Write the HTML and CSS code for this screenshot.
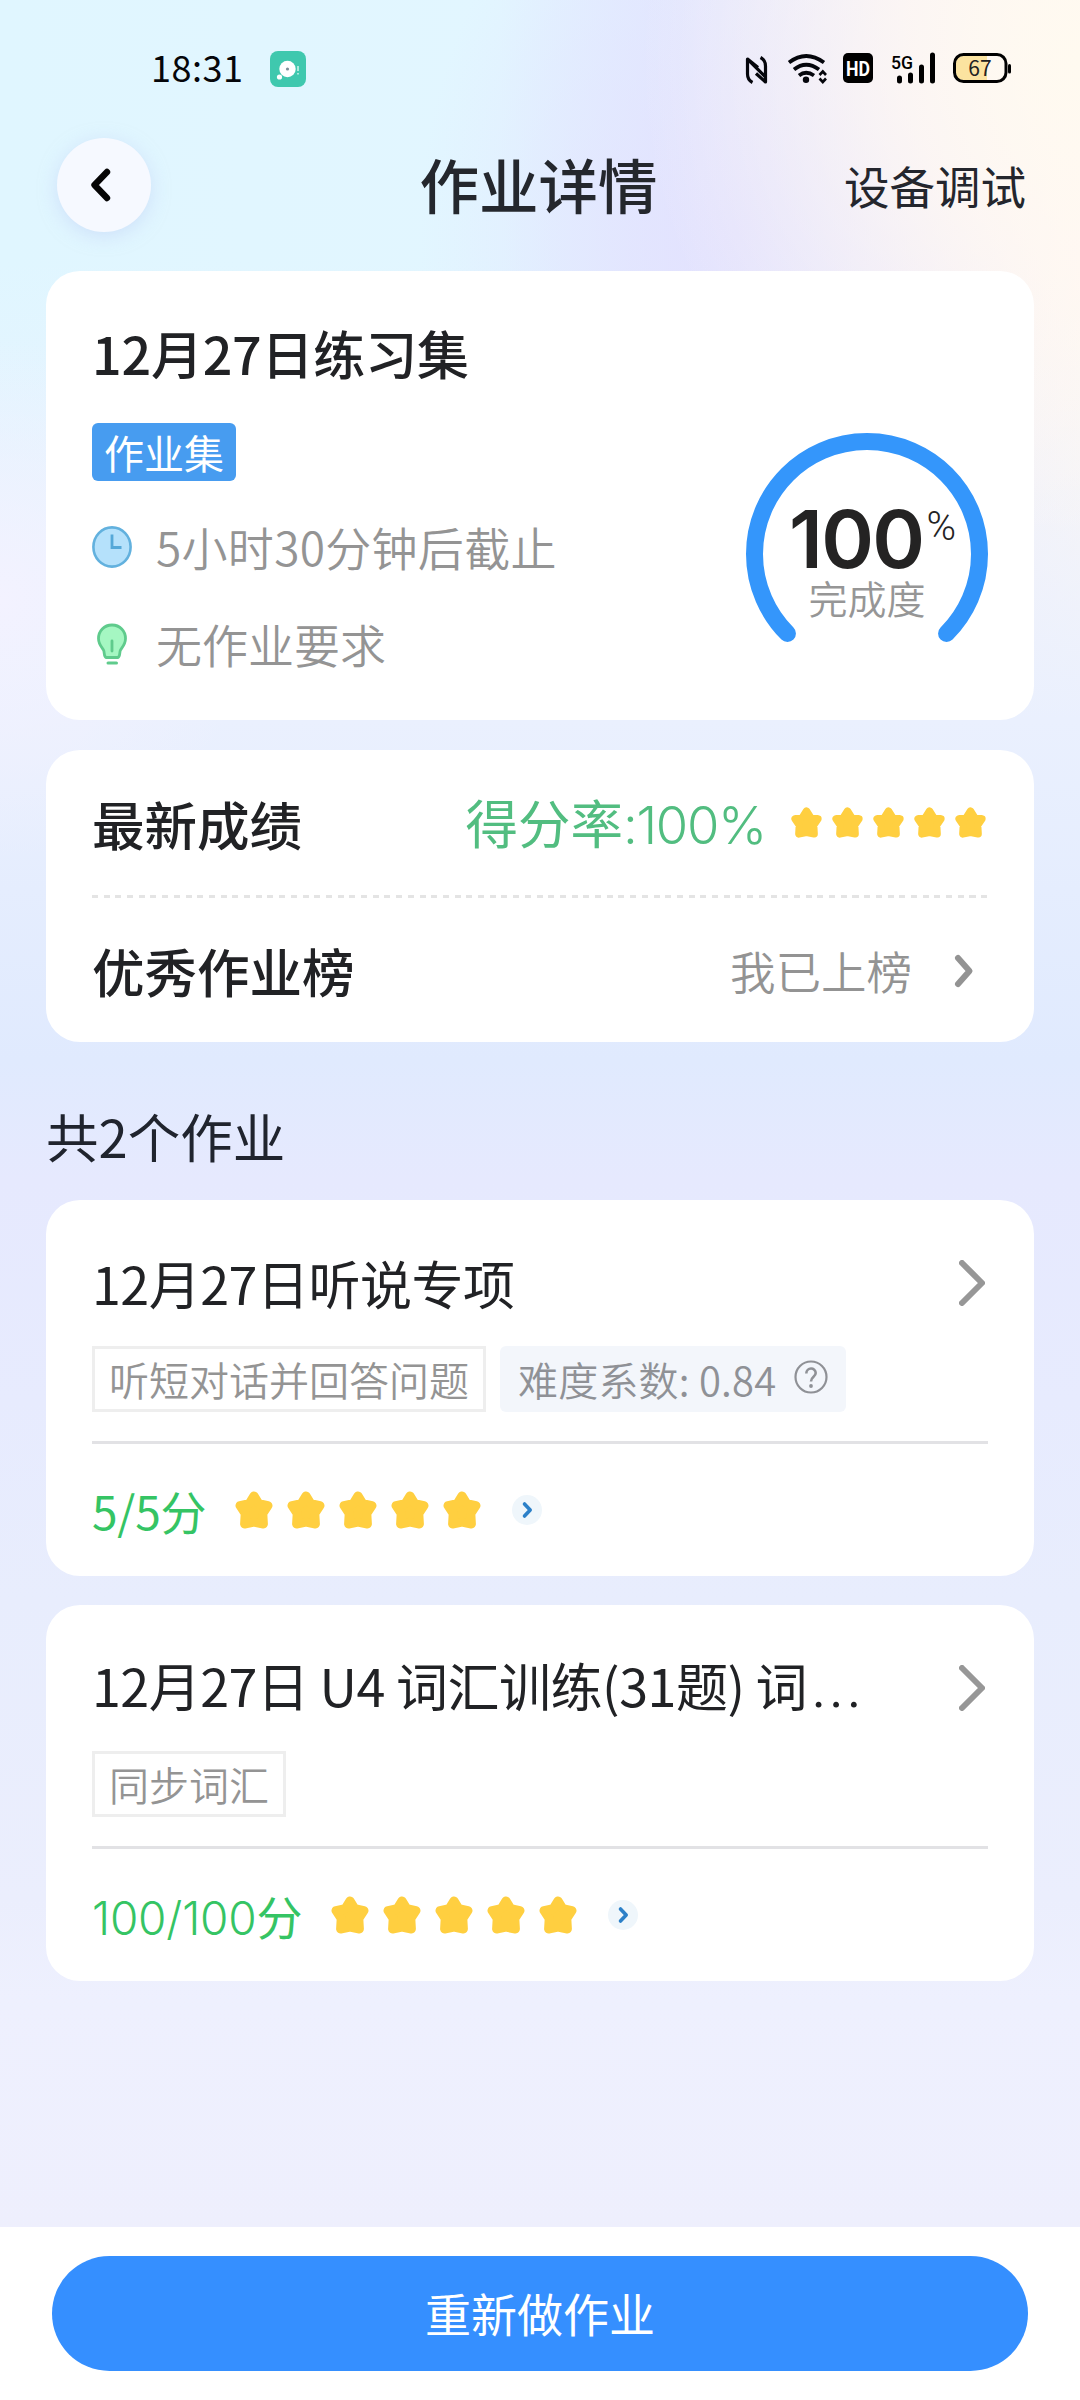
FILE: index.html
```html
<!DOCTYPE html>
<html lang="zh-CN">
<head>
<meta charset="utf-8">
<title>作业详情</title>
<link rel="stylesheet" href="styles.css">
</head>
<body>
<svg class="defs" width="0" height="0" aria-hidden="true">
  <symbol id="star" viewBox="0 0 38 38"><path d="M19 5 L23.8 12.6 L33 14.600 L27.800 22.400 L28.400 33 L19 31.200 L9.600 33 L10.200 22.400 L5 14.600 L14.200 12.600Z" fill="#ffcf40" stroke="#ffcf40" stroke-width="9" stroke-linejoin="round"/></symbol>
  <symbol id="go" viewBox="0 0 30 30"><circle cx="15" cy="15" r="15" fill="#eff6fb"/><path d="M12.500 9 L18.200 15 L12.500 21" fill="none" stroke="#2c80c8" stroke-width="3.600" stroke-linecap="round" stroke-linejoin="round"/></symbol>
  <symbol id="chev" viewBox="0 0 26 46"><path d="M3 3 L23 23 L3 43" fill="none" stroke="#979797" stroke-width="6" stroke-linecap="round" stroke-linejoin="round"/></symbol>
</svg>
<div class="screen">
  <div class="statusbar">
    <span class="time">18:31</span>
    <svg class="app" width="36" height="36" viewBox="0 0 36 36"><rect width="36" height="36" rx="8" fill="#3fc8ae"/><circle cx="17.5" cy="18" r="8.2" fill="#fff"/><circle cx="9.5" cy="26" r="2.6" fill="#fff"/><circle cx="17.5" cy="18" r="1.6" fill="#7d8f9a"/><path d="M28 15v5M28 22v1.5" stroke="#b8eee2" stroke-width="1.8"/></svg>
    <svg class="sys" width="270" height="36" viewBox="744 50 270 36">
      <path d="M752.500 82.500Q747.500 80 747.500 74V59L765.500 77V82L756 73.500M747.500 59L758 67.500M760.500 57.500Q765.500 60 765.500 66V81" fill="none" stroke="#05060c" stroke-width="3.200" stroke-linejoin="round"/>
      <g fill="none" stroke="#05060c" stroke-width="3.800"><path d="M789 62.500Q806 49.500 824 62.500"/><path d="M794 69.500Q806 60 819 69.500"/><path d="M799 75.500Q806 70 814 75.500"/></g>
      <circle cx="806" cy="79.800" r="3.200" fill="#05060c"/>
      <path d="M819.500 75L822.800 71.500L826 75M819.500 78.500L822.800 82L826 78.500" fill="none" stroke="#05060c" stroke-width="2.600"/>
      <rect x="843" y="53" width="30" height="30" rx="5" fill="#000"/>
      <text x="858" y="75.500" class="hd" text-anchor="middle" textLength="24" lengthAdjust="spacingAndGlyphs">HD</text>
      <text x="891" y="68.500" class="g5" textLength="22" lengthAdjust="spacingAndGlyphs">5G</text>
      <path d="M899.500 78V81M910.500 75V81M921.500 67V81M932.500 55V81" stroke="#000" stroke-width="5" stroke-linecap="round"/>
      <path d="M963 56H987V80H963Q956 80 956 73V63Q956 56 963 56Z" fill="#fbe3a0"/>
      <rect x="954.500" y="54.500" width="51.500" height="27" rx="9" fill="none" stroke="#000" stroke-width="3"/>
      <path d="M1009.500 65.500V72" stroke="#000" stroke-width="3" stroke-linecap="round"/>
      <text x="980" y="75.500" class="bat" text-anchor="middle">67</text>
    </svg>
  </div>

  <header class="nav">
    <div class="back"><svg width="30" height="40" viewBox="0 0 30 40"><path d="M21 7L8.500 20L21 33" fill="none" stroke="#050505" stroke-width="6.400" stroke-linecap="round" stroke-linejoin="round"/></svg></div>
    <h1>作业详情</h1>
    <span class="debug">设备调试</span>
  </header>

  <section class="card summary">
    <div class="info">
      <h2>12月27日练习集</h2>
      <span class="badge">作业集</span>
      <div class="meta"><svg width="40" height="42" viewBox="0 0 40 42"><ellipse cx="20" cy="21" rx="18.600" ry="19.600" fill="#b5e1fb" stroke="#62b1de" stroke-width="2.600"/><path d="M20 8.500V21.500H29.500" fill="none" stroke="#55a8d8" stroke-width="2.800"/></svg><span class="due">5小时30分钟后截止</span></div>
      <div class="meta meta-req"><svg width="40" height="42" viewBox="0 0 40 42"><path d="M20 2C12 2 6.500 8 6.500 15.500C6.500 21 9.500 24 11.500 27C12.800 29 11.500 34.500 14.500 34.500H25.500C28.500 34.500 27.200 29 28.500 27C30.500 24 33.500 21 33.500 15.500C33.500 8 28 2 20 2Z" fill="#a5f7c2" stroke="#5fcb8c" stroke-width="2.800"/><path d="M20 18V28" stroke="#5fcb8c" stroke-width="2.800" stroke-linecap="round"/><path d="M16 40H24.500" stroke="#5fcb8c" stroke-width="3" stroke-linecap="round"/></svg><span>无作业要求</span></div>
    </div>
    <div class="gauge">
      <svg class="ring" width="242" height="242" viewBox="0 0 242 242"><path d="M41.450 200.550A112.500 112.500 0 1 1 200.550 200.550" fill="none" stroke="#3496fb" stroke-width="17" stroke-linecap="round"/></svg>
      <div class="gauge-text">
        <div class="pct"><b>100</b><span>%</span></div>
        <div class="done">完成度</div>
      </div>
    </div>
  </section>

  <section class="card results">
    <div class="row"><h3>最新成绩</h3><span class="rate">得分率<span class="num">:100%</span></span><span class="stars small"><svg><use href="#star"/></svg><svg><use href="#star"/></svg><svg><use href="#star"/></svg><svg><use href="#star"/></svg><svg><use href="#star"/></svg></span></div>
    <div class="dash"></div>
    <div class="row rank"><h3>优秀作业榜</h3><span class="ranked">我已上榜</span><svg class="arrow" width="26" height="36" viewBox="0 0 26 36"><path d="M6 5L17.500 18L6 31" fill="none" stroke="#939393" stroke-width="6" stroke-linecap="round" stroke-linejoin="round"/></svg></div>
  </section>

  <h2 class="count">共2个作业</h2>

  <section class="card task">
    <div class="task-head"><h3>12月27日听说专项</h3><svg width="26" height="46"><use href="#chev"/></svg></div>
    <div class="tags"><span class="tag">听短对话并回答问题</span><span class="level">难度系数: 0.84<svg width="34" height="34" viewBox="0 0 34 34"><circle cx="17" cy="17" r="15.500" fill="none" stroke="#8f9196" stroke-width="2.200"/><path d="M12.300 13.500C12.300 7 21.700 7 21.700 13C21.700 17 17 16.500 17 21.500" fill="none" stroke="#8f9196" stroke-width="2.600"/><circle cx="17" cy="26" r="1.900" fill="#8f9196"/></svg></span></div>
    <div class="score"><span>5/5分</span><span class="stars"><svg><use href="#star"/></svg><svg><use href="#star"/></svg><svg><use href="#star"/></svg><svg><use href="#star"/></svg><svg><use href="#star"/></svg></span><svg class="go"><use href="#go"/></svg></div>
  </section>

  <section class="card task">
    <div class="task-head"><h3>12月27日 U4 词汇训练(31题) 词<span class="dots">...</span></h3><svg width="26" height="46"><use href="#chev"/></svg></div>
    <div class="tags"><span class="tag">同步词汇</span></div>
    <div class="score"><span><span class="num">100/100</span>分</span><span class="stars"><svg><use href="#star"/></svg><svg><use href="#star"/></svg><svg><use href="#star"/></svg><svg><use href="#star"/></svg><svg><use href="#star"/></svg></span><svg class="go"><use href="#go"/></svg></div>
  </section>

  <footer class="footer"><button>重新做作业</button></footer>
</div>
</body>
</html>
```
FILE: styles.css
```css
* { box-sizing: border-box; margin: 0; padding: 0; }
body { width: 1080px; height: 2400px; font-family: "Noto Sans CJK SC", "Noto Sans", sans-serif; color: #212225; }
.defs { display: block; width: 0; height: 0; }
h1, h2, h3 { font-weight: 500; white-space: nowrap; }
svg { display: block; flex: none; }
.screen {
  width: 1080px; height: 2400px; display: flex; flex-direction: column; overflow: hidden;
  background:
    radial-gradient(ellipse 440px 480px at 1080px 60px, #fffaf0 0%, rgba(255,248,242,.8) 40%, rgba(255,248,242,0) 100%),
    radial-gradient(ellipse 320px 420px at 740px 230px, #e3e2fe 0%, rgba(227,226,254,0) 100%),
    radial-gradient(ellipse 260px 260px at 0 600px, #f3f2ff 0%, rgba(243,242,255,0) 100%),
    linear-gradient(180deg, rgba(232,240,254,0) 0, rgba(232,240,254,0) 260px, #eaf0fe 720px, #e0eafe 1060px, #e6e9fe 1180px, #e7ebfe 1400px, #e8edfd 1600px, #ebeefd 1900px, #eef0fe 2000px, #eeeffd 2230px),
    linear-gradient(90deg, #e0f6ff 0, #e2f6ff 500px, #e2e9ff 680px, #f2effa 900px, #fff8f2 1080px);
}
.statusbar { height: 136px; padding: 50px 66px 0 151px; display: flex; align-items: flex-start; }
.time { margin-top: -2px; font-size: 36px; line-height: 36px; width: 119px; letter-spacing: .5px; color: #05060a; }
.app { margin-top: 1px; }
.sys { margin-left: auto; }
.hd { font: 700 21px "Roboto", sans-serif; fill: #fff; }
.g5 { font: 500 19px "Roboto", sans-serif; }
.bat { font: 400 21px "Noto Sans CJK SC", sans-serif; fill: #222; }
.nav { height: 97px; margin-bottom: 38px; padding: 0 54px 0 57px; display: grid; grid-template-columns: 1fr auto 1fr; align-items: center; }
.back { width: 94px; height: 94px; border-radius: 50%; background: #f6f9ff; box-shadow: 0 4px 18px rgba(190,205,245,.5); display: flex; align-items: center; justify-content: center; padding-right: 6px; }
.nav h1 { font-size: 59.500px; line-height: 90px; color: #24272d; margin: 0 3px 3px -3px; }
.debug { justify-self: end; font-size: 45.500px; line-height: 60px; color: #24262d; }
.card { margin: 0 46px; background: #fff; border-radius: 34px; flex: none; }
.summary { height: 449px; padding: 44px 46px 0; display: flex; justify-content: space-between; }
.info { display: flex; flex-direction: column; align-items: flex-start; }
.info h2 { font-size: 52px; line-height: 76px; letter-spacing: -.2px; }
.badge { margin-top: 32px; height: 58px; padding: 0 12px; font-size: 40px; line-height: 58px; color: #fff; background: #479cf0; border-radius: 6px; }
.meta { margin-top: 36px; height: 60px; display: flex; align-items: center; gap: 24px; font-size: 46px; color: #949494; font-weight: 350; }
.meta span { line-height: 60px; margin-top: -3px; }
.due { letter-spacing: .3px; }
.meta-req { margin-top: 37px; }
.gauge { margin-top: 118px; width: 242px; height: 242px; display: grid; }
.gauge > * { grid-area: 1 / 1; }
.gauge-text { display: flex; flex-direction: column; align-items: center; padding-top: 67px; }
.pct { display: flex; height: 70px; padding-left: 11px; color: #242323; }
.pct b { font: 600 80px/78px "Inter", sans-serif; letter-spacing: -1.600px; }
.pct span { font: 300 40px/54px "Roboto", sans-serif; margin-left: 3px; }
.done { margin-top: 0; font-size: 39px; line-height: 54px; color: #969696; font-weight: 350; }
.results { margin-top: 30px; height: 292px; padding: 0 46px; }
.row { height: 145px; display: flex; align-items: center; }
.row h3 { font-size: 52.500px; line-height: 76px; }
.rate { margin-left: auto; font-size: 52.500px; line-height: 76px; color: #52bd80; }
.num { font-family: "Inter", sans-serif; font-weight: 350; }
.rate .num { letter-spacing: -1.300px; }
.stars { display: flex; gap: 14px; }
.stars svg { width: 38px; height: 38px; }
.stars.small { gap: 10px; margin-left: 25px; margin-right: 2px; }
.stars.small svg { width: 31px; height: 31px; }
.dash { height: 3px; background: repeating-linear-gradient(90deg, #e4e4e4 0 6px, transparent 6px 11.700px); }
.rank h3, .rank .ranked { margin-top: -1px; }
.ranked { margin-left: auto; font-size: 45.500px; color: #939393; font-weight: 350; }
.arrow { margin-left: 40px; margin-right: 10px; }
.count { margin: 53px 46px 24px; font-size: 52.500px; line-height: 81px; font-weight: 400; color: #20242e; }
.task { height: 376px; padding: 42px 46px 0; margin-bottom: 29px; }
.task-head { display: flex; justify-content: space-between; align-items: center; height: 84px; }
.task-head h3 { font-size: 52px; line-height: 76px; font-weight: 400; letter-spacing: -.5px; margin-top: -3px; }
.task-head svg { margin: -3px 3px 0 0; }
.dots { font-family: "Roboto", sans-serif; letter-spacing: 3.800px; margin-left: 5px; }
.tags { display: flex; gap: 14px; height: 118px; padding: 20px 0 29px; border-bottom: 3px solid #e2e2e5; }
.tag, .level { height: 66px; font-size: 40px; color: #949494; font-weight: 350; white-space: nowrap; }
.tag { border: 3px solid #eee; padding: 0 14px; line-height: 60px; }
.level { display: flex; align-items: center; background: #f3f6fb; border-radius: 6px; padding: 0 18px; color: #8f9196; line-height: 66px; letter-spacing: .2px; }
.level svg { margin-left: 18px; margin-top: -4px; }
.score { display: flex; align-items: center; height: 132px; font-size: 46px; color: #35c464; letter-spacing: -.2px; }
.score .stars { margin-left: 29px; }
.go { width: 30px; height: 30px; margin-left: 31px; }
.footer { margin-top: auto; height: 173px; padding: 29px 52px; background: #fff; }
.footer button { display: block; width: 976px; height: 115px; padding-bottom: 3px; border: 0; border-radius: 58px; background: #358fff; color: #fff; font: 400 46px "Noto Sans CJK SC", sans-serif; }
```
